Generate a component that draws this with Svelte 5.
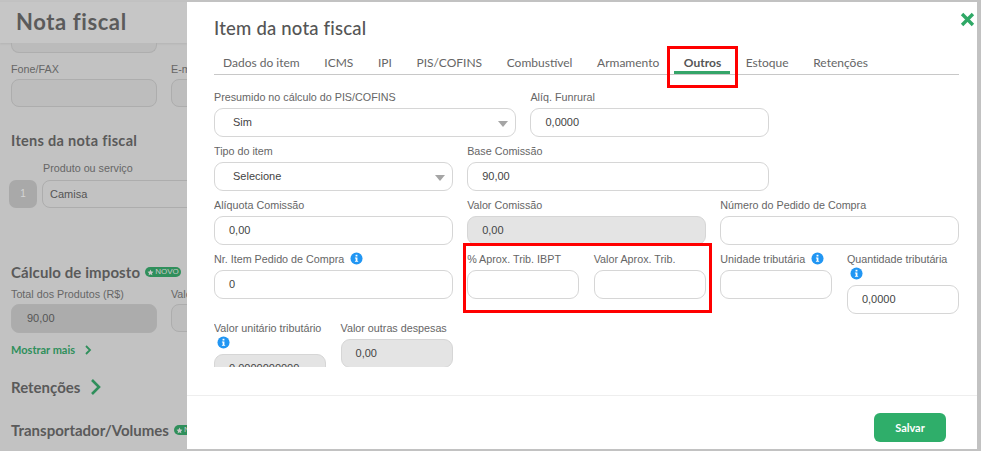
<script>
  const tabs = ['Dados do item', 'ICMS', 'IPI', 'PIS/COFINS', 'Combustível', 'Armamento', 'Outros', 'Estoque', 'Retenções'];
  const fields = [
    { label: 'Presumido no cálculo do PIS/COFINS', span: 5, value: 'Sim', select: true },
    { label: 'Alíq. Funrural', span: 4, value: '0,0000' },
    { label: 'Tipo do item', span: 4, value: 'Selecione', select: true },
    { label: 'Base Comissão', span: 5, value: '90,00' },
    { label: 'Alíquota Comissão', span: 4, value: '0,00' },
    { label: 'Valor Comissão', span: 4, value: '0,00', disabled: true },
    { label: 'Número do Pedido de Compra', span: 4, value: '' },
    { label: 'Nr. Item Pedido de Compra', span: 4, value: '0', info: true },
    { label: '% Aprox. Trib. IBPT', span: 2, value: '' },
    { label: 'Valor Aprox. Trib.', span: 2, value: '' },
    { label: 'Unidade tributária', span: 2, value: '', info: true },
    { label: 'Quantidade tributária', span: 2, value: '0,0000', info: true },
    { label: 'Valor unitário tributário', span: 2, value: '0,0000000000', disabled: true, info: true },
    { label: 'Valor outras despesas', span: 2, value: '0,00', disabled: true }
  ];
</script>

{#snippet info()}
  <svg class="info" viewBox="0 0 14 14" aria-hidden="true">
    <circle cx="7" cy="7" r="6.5" fill="#2196f3" />
    <rect x="6" y="3" width="2" height="1.8" fill="#fff" />
    <path d="M5.3 6h2.7v3.6h.8v1H5.3v-1h.8V7h-.8z" fill="#fff" />
  </svg>
{/snippet}

{#snippet badge()}
  <span class="badge">
    <svg viewBox="0 0 10 10" aria-hidden="true"><path d="M5 .8l1.3 2.7 3 .4-2.2 2 .6 3L5 7.4 2.3 8.9l.6-3-2.2-2 3-.4z" fill="#c8c8c8" /></svg>
    NOVO
  </span>
{/snippet}

<div class="screen">
  <div class="page">
    <header class="page-head"><h1>Nota fiscal</h1></header>
    <div class="page-body">
      <div class="stub"></div>
      <div class="row">
        <div class="bg-field"><span>Fone/FAX</span><div class="bg-input"></div></div>
        <div class="bg-field"><span>E-mail</span><div class="bg-input"></div></div>
      </div>
      <h2 class="items-title">Itens da nota fiscal</h2>
      <div class="product-label">Produto ou serviço</div>
      <div class="product">
        <span class="num">1</span>
        <div class="bg-input product-input">Camisa</div>
      </div>
      <h2 class="tax-title">Cálculo de imposto {@render badge()}</h2>
      <div class="row">
        <div class="bg-field"><span>Total dos Produtos (R$)</span><div class="bg-input filled">90,00</div></div>
        <div class="bg-field"><span>Valor</span><div class="bg-input"></div></div>
      </div>
      <div class="more">
        Mostrar mais
        <svg viewBox="0 0 8 12" aria-hidden="true"><path d="M2 2l4 4-4 4" fill="none" stroke="#2f8f5b" stroke-width="1.8" /></svg>
      </div>
      <h2 class="ret-title">
        Retenções
        <svg viewBox="0 0 12 18" aria-hidden="true"><path d="M2 2l7 7-7 7" fill="none" stroke="#2f8f5b" stroke-width="2.6" /></svg>
      </h2>
      <h2 class="ship-title">Transportador/Volumes {@render badge()}</h2>
    </div>
  </div>

  <div class="modal">
    <h2 class="modal-title">Item da nota fiscal</h2>
    <button class="close" aria-label="Fechar">
      <svg viewBox="0 0 16 16"><path d="M2.2 2.2l11.6 11.6M13.8 2.2L2.2 13.8" stroke="#2fa866" stroke-width="3.6" fill="none" /></svg>
    </button>
    <nav class="tabs">
      {#each tabs as tab}
        <span class="tab" class:active={tab === 'Outros'}>{tab}</span>
      {/each}
    </nav>
    <div class="form">
      {#each fields as f}
        <div class="field" style="grid-column: span {f.span}">
          <div class="label">
            <span>{f.label}</span>
            {#if f.info}{@render info()}{/if}
          </div>
          <div class="input" class:disabled={f.disabled} class:select={f.select}>
            {f.value}
            {#if f.select}<i class="caret"></i>{/if}
          </div>
        </div>
      {/each}
    </div>
    <footer class="foot"><button class="save">Salvar</button></footer>
  </div>

  <div class="mark mark-tab"></div>
  <div class="mark mark-fields"></div>
</div>

<style>
  :global(body) {
    margin: 0;
    background: #c2c2c2;
  }
  .screen {
    position: relative;
    width: 981px;
    height: 451px;
    overflow: hidden;
    background: #c2c2c2;
    font-family: "Liberation Sans", Arial, sans-serif;
    color: #5c5c5c;
  }
  .page {
    width: 187px;
    height: 451px;
    overflow: hidden;
  }
  .page-head {
    height: 41px;
    margin-top: 2px;
    padding-left: 16px;
    background: #c6c6c6;
    box-sizing: border-box;
    box-shadow: 0 1px 2px rgba(0, 0, 0, .08);
  }
  h1 {
    margin: 0;
    padding-top: 6px;
    font: 700 22px/28px Lato, sans-serif;
    color: #5b5b5b;
    letter-spacing: .6px;
  }
  .page-body { padding-left: 11px; width: 320px; }
  .stub {
    width: 146px;
    height: 10px;
    margin-bottom: 10px;
    border: 1px solid #aeaeae;
    border-top: 0;
    border-radius: 0 0 8px 8px;
    background: #bbb;
    box-sizing: border-box;
  }
  .row { display: flex; gap: 14px; }
  .bg-field { width: 146px; flex: none; font-size: 10.75px; line-height: 13px; color: #666; }
  .bg-field span { display: block; margin-bottom: 3px; }
  .bg-input {
    height: 28px;
    padding-left: 15px;
    border: 1px solid #adadad;
    border-radius: 8px;
    background: #bdbdbd;
    box-sizing: border-box;
    font-size: 11px;
    line-height: 26px;
    color: #555;
  }
  .bg-input.filled { height: 29px; line-height: 27px; background: #acacac; }
  h2 {
    margin: 0;
    font-family: Lato, sans-serif;
    font-weight: 700;
    color: #5a5a5a;
  }
  .items-title { margin-top: 25px; font-size: 14.5px; line-height: 18px; letter-spacing: .3px; }
  .product-label { margin: 12px 0 0 32px; font-size: 10.75px; line-height: 13px; color: #666; }
  .product { display: flex; gap: 5px; margin-top: 5px; }
  .num {
    width: 28px;
    height: 28px;
    margin-left: -2px;
    border-radius: 7px;
    background: #a9a9a9;
    color: #d5d5d5;
    font-size: 10px;
    line-height: 28px;
    text-align: center;
  }
  .product-input { width: 200px; padding-left: 7px; background: #c2c2c2; }
  .tax-title { margin-top: 55px; font-size: 15px; line-height: 18px; display: flex; align-items: center; gap: 5px; letter-spacing: .1px; }
  .tax-title + .row { margin-top: 7px; }
  .badge {
    display: inline-flex;
    align-items: center;
    gap: 1px;
    height: 10px;
    padding: 0 2px;
    border-radius: 5px;
    background: #2f8f5b;
    color: #c8c8c8;
    font: 400 8px/10px "Liberation Sans", sans-serif;
    letter-spacing: 0;
  }
  .badge svg { width: 7px; height: 7px; }
  .more {
    display: flex;
    align-items: center;
    gap: 9px;
    margin-top: 10px;
    font: 700 11px/13px Lato, sans-serif;
    color: #2f8f5b;
  }
  .more svg { width: 8px; height: 12px; }
  .ret-title { margin-top: 22px; font-size: 15px; line-height: 18px; display: flex; align-items: center; gap: 10px; }
  .ret-title svg { width: 12px; height: 18px; }
  .ship-title { margin-top: 25px; font-size: 15px; line-height: 18px; display: flex; align-items: center; gap: 5px; white-space: nowrap; }

  .modal {
    position: absolute;
    left: 187px;
    top: 2px;
    width: 790px;
    height: 447px;
    background: #fff;
    display: flex;
    flex-direction: column;
    padding: 0 18px 0 27px;
    box-sizing: border-box;
  }
  .modal-title {
    margin: 15px 0 0;
    font: 500 18.5px/22px Lato, sans-serif;
    letter-spacing: .2px;
    color: #555;
  }
  .close {
    position: absolute;
    right: 2px;
    top: 10px;
    width: 15px;
    height: 15px;
    padding: 0;
    border: 0;
    background: none;
  }
  .close svg { display: block; }
  .tabs {
    display: flex;
    gap: 24.6px;
    height: 34px;
    margin-top: 2px;
    margin-bottom: 15px;
    padding-left: 9px;
    padding-top: 15px;
    box-sizing: border-box;
    border-bottom: 1px solid #c8c8c8;
    font: 400 12px/14px Lato, sans-serif;
    color: #666;
    flex: none;
  }
  .tab { position: relative; height: 18px; }
  .tab.active { font-weight: 700; color: #555; }
  .tab.active::after {
    content: '';
    position: absolute;
    left: -10px;
    right: -9px;
    bottom: 0;
    height: 3px;
    background: #35a569;
  }
  .form {
    display: grid;
    grid-template-columns: repeat(12, 1fr);
    column-gap: 14.5px;
    grid-auto-rows: min-content;
    align-items: start;
    height: 277px;
    overflow: hidden;
    flex: none;
    font-size: 10.75px;
  }
  .field { min-width: 0; margin-bottom: 7px; }
  .label { display: block; line-height: 15px; color: #666; margin-bottom: 3px; }
  .info { display: inline-block; width: 13px; height: 13px; margin-left: 3px; vertical-align: -2px; }
  .input {
    position: relative;
    height: 29px;
    padding-left: 14px;
    border: 1px solid #d6d6d6;
    border-radius: 9px;
    box-sizing: border-box;
    background: #fff;
    font-size: 11px;
    line-height: 26px;
    color: #444;
  }
  .input.select { padding-left: 18px; }
  .input.disabled { background: #e4e4e4; }
  .caret {
    position: absolute;
    right: 7px;
    top: 12px;
    border: 5px solid transparent;
    border-top: 6px solid #a5a5a5;
    border-bottom: 0;
  }
  .foot {
    flex: 1;
    display: flex;
    justify-content: flex-end;
    align-items: flex-start;
    margin: 28px -18px 0 -27px;
    padding: 17px 31px 0 0;
    border-top: 1px solid #eee;
  }
  .save {
    width: 72px;
    height: 29px;
    border: 0;
    border-radius: 6px;
    background: #2fae6a;
    color: #fff;
    font: 700 11px Lato, sans-serif;
  }
  .mark { position: absolute; border: 3px solid #f00; box-sizing: border-box; }
  .mark-tab { left: 667px; top: 46px; width: 71px; height: 42px; }
  .mark-fields { left: 463px; top: 243px; width: 249px; height: 70px; }
</style>
